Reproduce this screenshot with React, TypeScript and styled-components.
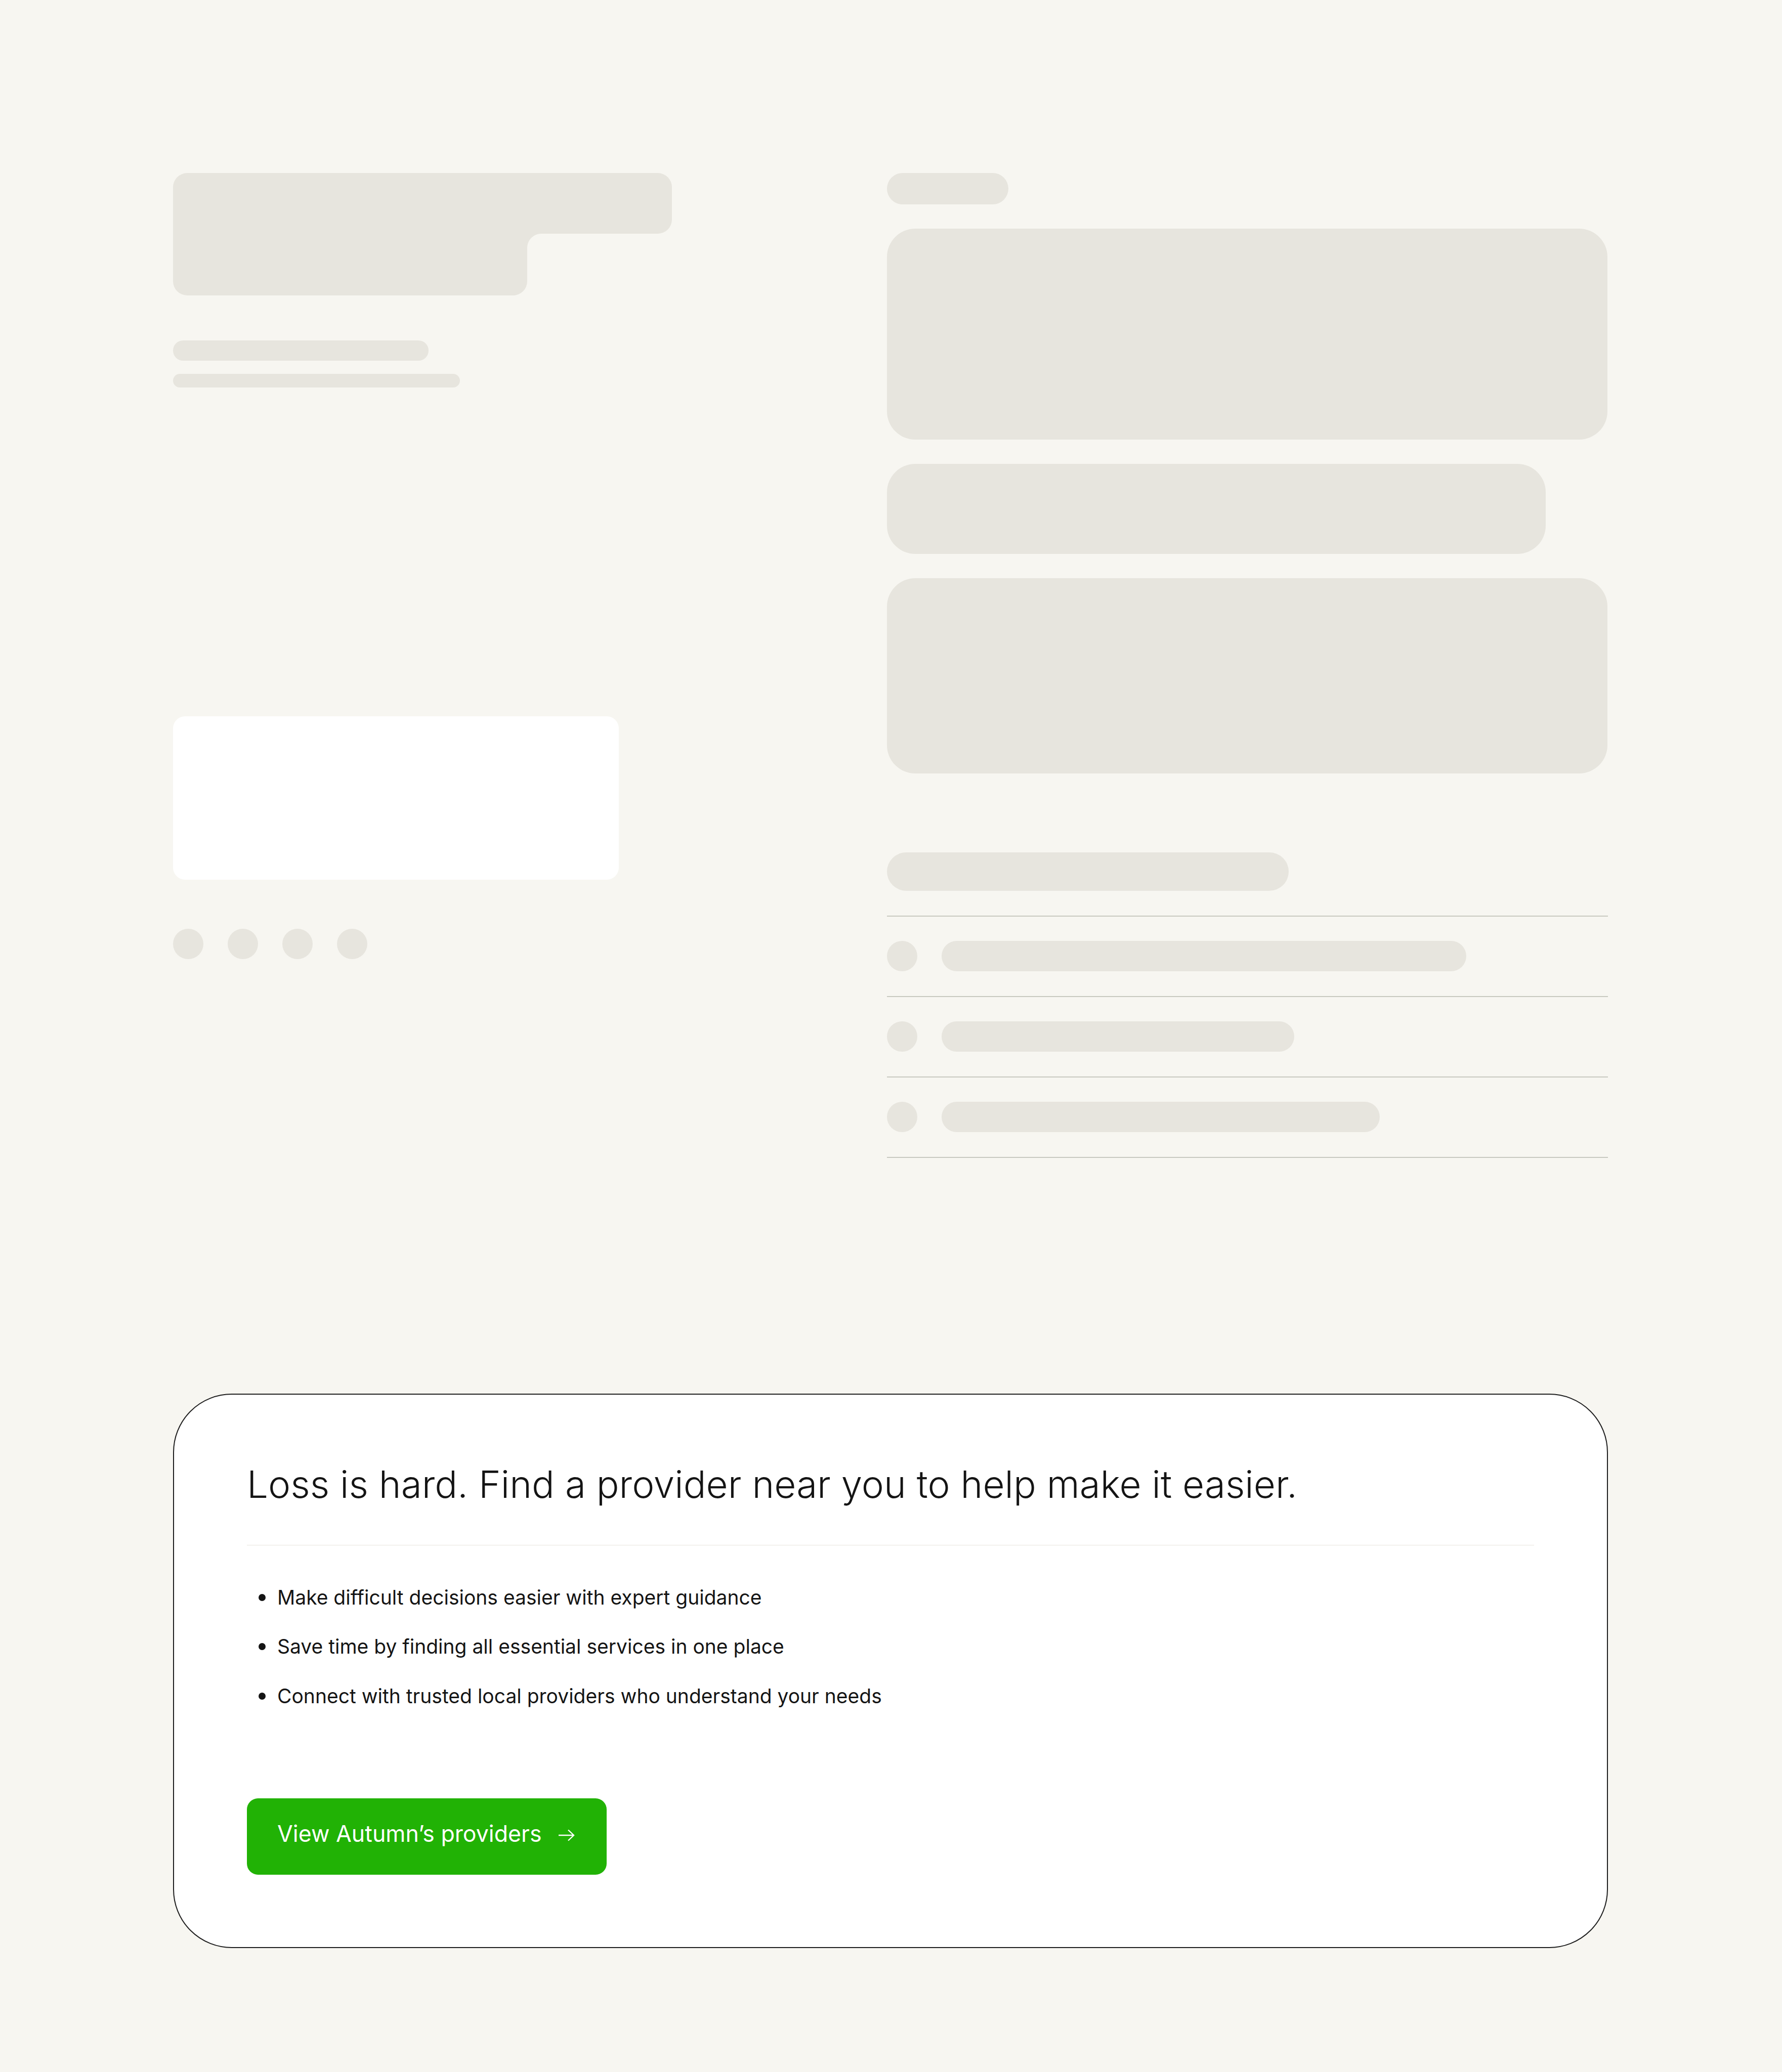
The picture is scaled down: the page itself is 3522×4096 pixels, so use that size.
import React from "react";
import styled, { createGlobalStyle } from "styled-components";

const SKELETON = "#e7e5de";
const BG = "#f7f6f1";

const GlobalStyle = createGlobalStyle`
  html, body {
    margin: 0;
    padding: 0;
    background: ${BG};
  }
  body {
    font-family: Inter, "Liberation Sans", Arial, sans-serif;
    color: #141414;
  }
  * { box-sizing: border-box; }
`;

const Page = styled.div`
  width: 3522px;
  min-height: 4096px;
  padding: 342px 344px 246px 342px;
  background: ${BG};
`;

const TopSection = styled.div`
  display: flex;
  justify-content: space-between;
  align-items: flex-start;
`;

const LeftColumn = styled.div`
  display: flex;
  flex-direction: column;
  width: 1000px;
`;

const HeadlineShape = styled.div`
  display: flex;
  flex-direction: column;
`;

const HeadlineTop = styled.div`
  width: 986px;
  height: 120px;
  background: ${SKELETON};
  border-radius: 28px 28px 28px 0;
`;

const HeadlineBottom = styled.div`
  position: relative;
  width: 700px;
  height: 122px;
  background: ${SKELETON};
  border-radius: 0 0 28px 28px;

  &::after {
    content: "";
    position: absolute;
    left: 100%;
    top: 0;
    width: 28px;
    height: 28px;
    background: radial-gradient(
      circle at 100% 100%,
      transparent 27.5px,
      ${SKELETON} 28.5px
    );
  }
`;

const Line = styled.div<{ $w: number; $h: number; $mt: number }>`
  width: ${(p) => p.$w}px;
  height: ${(p) => p.$h}px;
  margin-top: ${(p) => p.$mt}px;
  border-radius: 999px;
  background: ${SKELETON};
`;

const WhiteCard = styled.div`
  width: 881px;
  height: 323px;
  margin-top: 650px;
  border-radius: 24px;
  background: #ffffff;
`;

const DotRow = styled.div`
  display: flex;
  gap: 48px;
  margin-top: 97px;
`;

const Dot = styled.div`
  width: 60px;
  height: 60px;
  border-radius: 50%;
  background: ${SKELETON};
`;

const RightColumn = styled.div`
  display: flex;
  flex-direction: column;
  width: 1425px;
`;

const Stack = styled.div`
  display: flex;
  flex-direction: column;
  gap: 48px;
`;

const Block = styled.div<{ $w: number; $h: number }>`
  width: ${(p) => p.$w}px;
  height: ${(p) => p.$h}px;
  border-radius: 56px;
  background: ${SKELETON};
`;

const ListHeader = styled.div`
  width: 794px;
  height: 76px;
  margin-top: 156px;
  border-radius: 999px;
  background: ${SKELETON};
`;

const List = styled.div`
  margin-top: 49px;
  display: flex;
  flex-direction: column;
  border-bottom: 2px solid #c8c9c0;
`;

const ListRow = styled.div`
  display: flex;
  align-items: center;
  gap: 48px;
  padding: 48px 0 49px;
  border-top: 2px solid #c8c9c0;
`;

const RowDot = styled.div`
  width: 60px;
  height: 60px;
  flex: none;
  border-radius: 50%;
  background: ${SKELETON};
`;

const RowBar = styled.div<{ $w: number }>`
  width: ${(p) => p.$w}px;
  height: 60px;
  border-radius: 999px;
  background: ${SKELETON};
`;

const PromoCard = styled.section`
  margin-top: 466px;
  background: #ffffff;
  border: 2px solid #1e1e1e;
  border-radius: 116px;
  padding: 133px 144px 143px 144px;
`;

const PromoTitle = styled.h2`
  margin: 0;
  font-family: Inter, "Liberation Sans", Arial, sans-serif;
  font-weight: 300;
  font-size: 74.5px;
  line-height: 88.5px;
  color: #141414;
`;

const Divider = styled.hr`
  margin: 75px 0 0;
  border: 0;
  height: 1px;
  background: #e8e5de;
`;

const Bullets = styled.ul`
  list-style: none;
  margin: 74px 0 0;
  padding: 0 0 0 23px;
  display: flex;
  flex-direction: column;
  gap: 39px;
`;

const Bullet = styled.li`
  display: flex;
  align-items: center;
  gap: 23px;
  font-size: 39px;
  line-height: 58.5px;
  color: #141414;

  &::before {
    content: "";
    width: 14px;
    height: 14px;
    flex: none;
    border-radius: 50%;
    background: #141414;
  }
`;

const CtaButton = styled.button`
  display: inline-flex;
  align-items: center;
  gap: 32px;
  margin-top: 173px;
  padding: 37px 63px 48px 60px;
  border: 0;
  border-radius: 22px;
  background: #21b205;
  color: #ffffff;
  font-family: Inter, "Liberation Sans", Arial, sans-serif;
  font-size: 44.7px;
  font-weight: 400;
  line-height: 66px;
  cursor: pointer;
`;

const ArrowIcon = styled.svg`
  width: 33px;
  height: 24px;
  flex: none;
  margin-top: 6px;
`;

const CtaWrap = styled.div`
  display: flex;
`;

const rows = [1037, 697, 866];

export default function App() {
  return (
    <>
      <GlobalStyle />
      <Page>
        <TopSection>
          <LeftColumn>
            <HeadlineShape>
              <HeadlineTop />
              <HeadlineBottom />
            </HeadlineShape>
            <Line $w={505} $h={40} $mt={89} />
            <Line $w={567} $h={27} $mt={26} />
            <WhiteCard />
            <DotRow>
              <Dot />
              <Dot />
              <Dot />
              <Dot />
            </DotRow>
          </LeftColumn>
          <RightColumn>
            <Stack>
              <Block $w={240} $h={62} />
              <Block $w={1424} $h={417} />
              <Block $w={1302} $h={178} />
              <Block $w={1424} $h={386} />
            </Stack>
            <ListHeader />
            <List>
              {rows.map((w, i) => (
                <ListRow key={i}>
                  <RowDot />
                  <RowBar $w={w} />
                </ListRow>
              ))}
            </List>
          </RightColumn>
        </TopSection>
        <PromoCard>
          <PromoTitle>
            Loss is hard. Find a provider near you to help make it easier.
          </PromoTitle>
          <Divider />
          <Bullets>
            <Bullet>Make difficult decisions easier with expert guidance</Bullet>
            <Bullet>Save time by finding all essential services in one place</Bullet>
            <Bullet>Connect with trusted local providers who understand your needs</Bullet>
          </Bullets>
          <CtaWrap>
            <CtaButton type="button">
              View Autumn’s providers
              <ArrowIcon viewBox="0 0 33 24" fill="none">
                <path
                  d="M1 12H31M20 1.5L31 12L20 22.5"
                  stroke="#ffffff"
                  strokeWidth="2.4"
                />
              </ArrowIcon>
            </CtaButton>
          </CtaWrap>
        </PromoCard>
      </Page>
    </>
  );
}
